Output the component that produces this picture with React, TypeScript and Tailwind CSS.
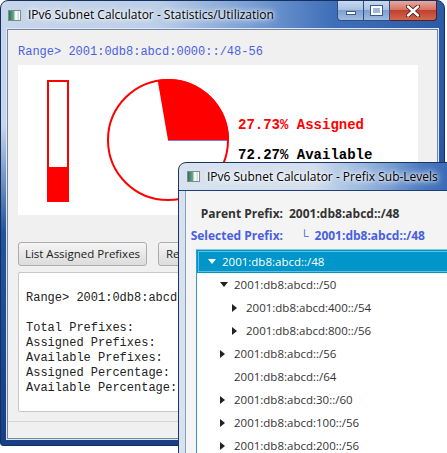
const mono = "font-['Liberation_Mono','Courier_New',monospace]";
const ui = "font-['Segoe_UI','Open_Sans','Noto_Sans',sans-serif]";

type Node = { label: string; level: number; arrow: "down" | "right" | null; selected?: boolean };

const tree: Node[] = [
  { label: "2001:db8:abcd::/48", level: 0, arrow: "down", selected: true },
  { label: "2001:db8:abcd::/50", level: 1, arrow: "down" },
  { label: "2001:db8:abcd:400::/54", level: 2, arrow: "right" },
  { label: "2001:db8:abcd:800::/56", level: 2, arrow: "right" },
  { label: "2001:db8:abcd::/56", level: 1, arrow: "right" },
  { label: "2001:db8:abcd::/64", level: 1, arrow: null },
  { label: "2001:db8:abcd:30::/60", level: 1, arrow: "right" },
  { label: "2001:db8:abcd:100::/56", level: 1, arrow: "right" },
  { label: "2001:db8:abcd:200::/56", level: 1, arrow: "right" },
];

const indent = ["pl-[11px]", "pl-[23px]", "pl-[35px]"];

function AppIcon() {
  return (
    <div className="w-[13px] h-[11px] shrink-0 border border-[#7d8a96] bg-[linear-gradient(90deg,#2f6f58_0%,#6fae8e_45%,#eef4f1_55%,#ffffff_75%,#aab6c0_82%,#ffffff_90%)]" />
  );
}

function Title({ text }: { text: string }) {
  return (
    <span className={`${ui} text-[12px] text-black whitespace-nowrap [text-shadow:0_0_6px_#fff,0_0_10px_#fff,0_0_3px_#fff]`}>
      {text}
    </span>
  );
}

function CaptionButtons() {
  return (
    <div className="ml-auto mr-[7px] flex h-[20px]">
      <div className="w-[27px] h-[20px] rounded-bl-[4px] border border-t-0 border-[#2e4f80] bg-[linear-gradient(180deg,#c9d9ee_0%,#a9c2e3_45%,#7f9fcf_50%,#9fbbe2_100%)] flex items-end justify-center pb-[5px]">
        <div className="w-[10px] h-[4px] bg-white border border-[#3b5a85]" />
      </div>
      <div className="w-[26px] h-[20px] border-b border-r border-[#2e4f80] bg-[linear-gradient(180deg,#c9d9ee_0%,#a9c2e3_45%,#7f9fcf_50%,#9fbbe2_100%)] flex items-center justify-center">
        <div className="w-[11px] h-[9px] border-2 border-white outline outline-1 outline-[#3b5a85] bg-[#9fb7dc]" />
      </div>
      <div className="w-[47px] h-[20px] rounded-br-[4px] border-b border-r border-[#5a1f1a] bg-[linear-gradient(180deg,#e8a99c_0%,#d47566_45%,#c4402e_50%,#d0694f_100%)] flex items-center justify-center">
        <svg width="14" height="12" viewBox="0 0 14 12">
          <path d="M2 1.5 L12 10.5 M12 1.5 L2 10.5" stroke="#4a1a16" strokeWidth="4.2" strokeLinecap="round" />
          <path d="M2 1.5 L12 10.5 M12 1.5 L2 10.5" stroke="#ffffff" strokeWidth="2.4" strokeLinecap="round" />
        </svg>
      </div>
    </div>
  );
}

function StatsWindow() {
  return (
    <div className="absolute left-0 top-0 w-[445px] h-[446px] rounded-t-[8px] rounded-b-[3px] border border-[#12315e] flex flex-col bg-[linear-gradient(180deg,rgba(27,76,154,0)_0%,rgba(27,76,154,0)_28%,rgba(27,76,154,0.95)_52%,#163f86_100%),linear-gradient(90deg,#c7d6ea_0%,#bccfe7_35%,#7da2d6_55%,#3f6fb9_75%,#2b5ba8_100%)]">
      <div className="h-[28px] flex items-start">
        <div className="h-[28px] flex items-center gap-[7px] pl-[7px]">
          <AppIcon />
          <Title text="IPv6 Subnet Calculator - Statistics/Utilization" />
        </div>
        <CaptionButtons />
      </div>
      <div className="mx-[6px] mb-[6px] flex-1 border border-[#6f86a8] bg-[#f0f0f0] flex flex-col pl-[10px] pr-[18px] pt-[15px] shadow-[0_0_0_1px_#dfe8f3]">
        <div className={`${mono} text-[12px] leading-[15px] text-[#4b61e2]`}>Range&gt; 2001:0db8:abcd:0000::/48-56</div>
        <div className="mt-[5px] w-[400px] h-[150px] bg-white flex items-center">
          <svg width="220" height="150" viewBox="0 0 220 150" className="shrink-0">
            <rect x="30" y="16" width="20" height="120" fill="none" stroke="#ff0000" strokeWidth="2" />
            <rect x="29" y="102" width="22" height="35" fill="#ff0000" />
            <path d="M150 75 L211 75 A61 61 0 0 0 139.6 14.9 Z" fill="#ff0000" />
            <line x1="150" y1="75.5" x2="211" y2="75.5" stroke="#7a78d8" strokeWidth="1" />
            <circle cx="150" cy="75" r="60" fill="none" stroke="#ff0000" strokeWidth="2" />
          </svg>
          <div className={`${mono} font-bold text-[14px] leading-[16px] flex flex-col gap-[14px]`}>
            <span className="text-[#ff0000] whitespace-pre">27.73% Assigned</span>
            <span className="text-black whitespace-pre">72.27% Available</span>
          </div>
        </div>
        <div className="mt-[27px] flex gap-[11px]">
          <button className={`${ui} w-[129px] h-[24px] rounded-[3px] border border-[#acacac] bg-[linear-gradient(180deg,#f6f6f6_0%,#e8e8e8_50%,#dcdcdc_100%)] text-[11.5px] text-[#222]`}>
            List Assigned Prefixes
          </button>
          <button className={`${ui} w-[90px] h-[24px] rounded-[3px] border border-[#acacac] bg-[linear-gradient(180deg,#f6f6f6_0%,#e8e8e8_50%,#dcdcdc_100%)] text-[11.5px] text-[#222] text-left pl-[7px]`}>
            Refresh
          </button>
        </div>
        <div className={`${mono} mt-[6px] h-[140px] rounded-[2px] border border-[#c8c8c8] bg-white pl-[7px] pt-[18px] text-[12px] leading-[15px] text-[#222] whitespace-pre`}>
          {"Range> 2001:0db8:abcd\n\nTotal Prefixes:\nAssigned Prefixes:\nAvailable Prefixes:\nAssigned Percentage:\nAvailable Percentage:"}
        </div>
        <div className="flex-1" />
        <div className="-ml-[10px] -mr-[18px] h-[17px] border-t border-[#d5d5d5]" />
      </div>
    </div>
  );
}

function Arrow({ dir, selected }: { dir: "down" | "right"; selected?: boolean }) {
  const fill = selected ? "#ffffff" : "#222222";
  return dir === "down" ? (
    <svg width="8" height="5" viewBox="0 0 8 5">
      <path d="M0 0 H8 L4 5 Z" fill={fill} />
    </svg>
  ) : (
    <svg width="5" height="8" viewBox="0 0 5 8">
      <path d="M0 0 V8 L5 4 Z" fill={fill} />
    </svg>
  );
}

function PrefixWindow() {
  return (
    <div className="absolute left-[178px] top-[162px] w-[300px] h-[310px] rounded-t-[8px] border border-[#1a3560] flex flex-col bg-[linear-gradient(90deg,#d8e2ef_0%,#d2deed_45%,#8fb0dc_65%,#4a79c0_82%,#2a5aab_100%)]">
      <div className="h-[28px] flex items-center gap-[7px] pl-[8px] border-b border-[#1c3f78]">
        <AppIcon />
        <Title text="IPv6 Subnet Calculator - Prefix Sub-Levels" />
      </div>
      <div className="ml-[6px] flex-1 border-l border-[#8aa0bf] bg-[#f4f4f4] flex flex-col pl-[10px] pt-[12px]">
        <div className={`${ui} grid grid-cols-[87px_1fr] gap-x-[6px] text-[12px] font-bold`}>
          <div className="h-[22px] flex items-center justify-end text-[#333]">Parent Prefix:</div>
          <div className="h-[22px] flex items-center text-[#333]">2001:db8:abcd::/48</div>
          <div className="h-[22px] flex items-center justify-end text-[#4a5fe0] whitespace-nowrap">Selected Prefix:</div>
          <div className="h-[22px] flex items-center text-[#4a5fe0]">
            <span className="ml-[11px] mr-[6px] font-normal">└</span>2001:db8:abcd::/48
          </div>
        </div>
        <div className="mt-[2px] flex-1 border border-[#2b9fd2] border-t-[#7cc8e8] bg-white flex flex-col">
          {tree.map((n, i) => (
            <div
              key={i}
              className={`${ui} ${indent[n.level]} h-[23px] shrink-0 flex items-center text-[11.5px] ${
                n.selected
                  ? "bg-[#0096c9] text-white shadow-[inset_0_0_0_1px_#0093c4,inset_0_0_0_2px_#5ec0e4]"
                  : "text-[#333]"
              }`}
            >
              <div className="w-[14px] shrink-0 flex items-center">
                {n.arrow && <Arrow dir={n.arrow} selected={n.selected} />}
              </div>
              <span className="whitespace-nowrap">{n.label}</span>
            </div>
          ))}
        </div>
      </div>
    </div>
  );
}

export default function App() {
  return (
    <div className="relative w-[447px] h-[453px] overflow-hidden bg-white">
      <StatsWindow />
      <PrefixWindow />
    </div>
  );
}
